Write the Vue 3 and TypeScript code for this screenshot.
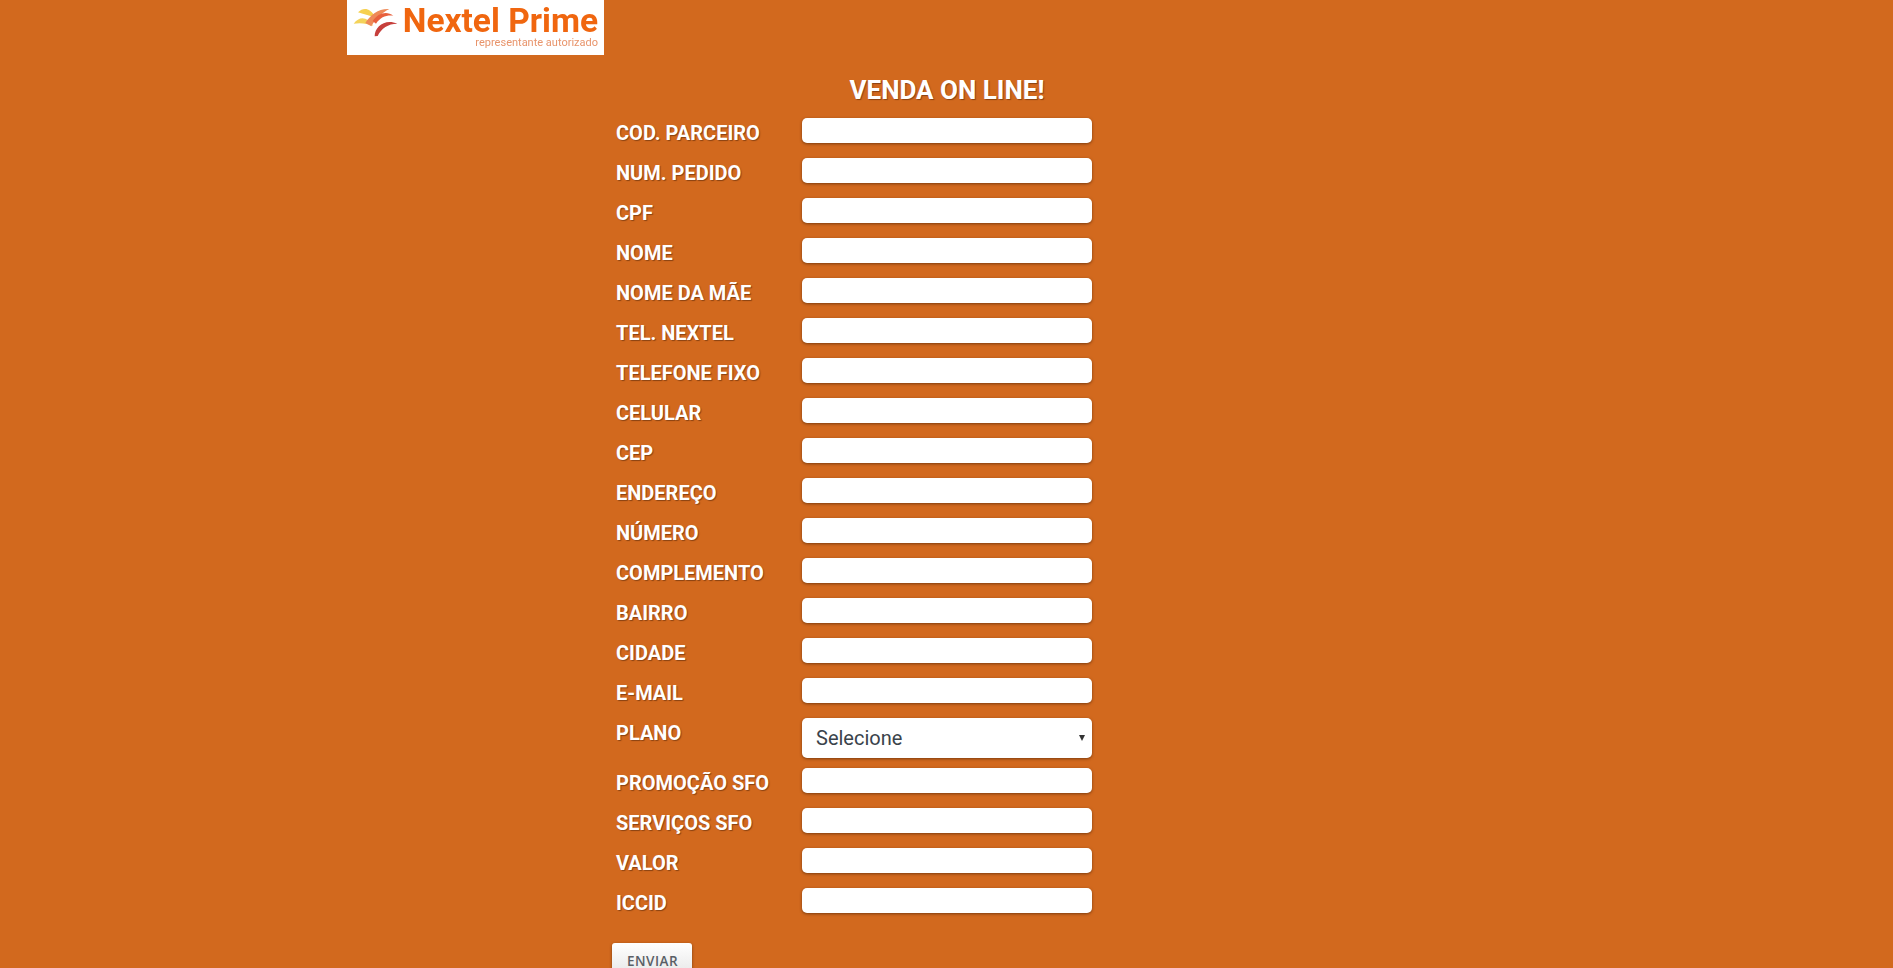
<script setup lang="ts">
const before: string[] = ['COD. PARCEIRO','NUM. PEDIDO','CPF','NOME','NOME DA MÃE','TEL. NEXTEL','TELEFONE FIXO','CELULAR','CEP','ENDEREÇO','NÚMERO','COMPLEMENTO','BAIRRO','CIDADE','E-MAIL']
const after: string[] = ['PROMOÇÃO SFO','SERVIÇOS SFO','VALOR','ICCID']
</script>

<template>
  <div class="page">
    <header class="logo">
      <svg class="mark" viewBox="25 20 135 90" fill="none">
        <path d="M40 36 C56 20 76 22 92 50 C76 48 60 42 40 36Z" fill="#f6d04e"/>
        <path d="M27 70 C44 46 68 48 86 76 C68 70 48 66 27 70Z" fill="#f4d35a"/>
        <path d="M62 68 C78 42 102 24 134 26 C114 36 94 52 80 78Z" fill="#ee8a58"/>
        <path d="M84 62 C100 38 126 30 146 46 C124 44 108 50 94 70Z" fill="#e8603c"/>
        <path d="M90 108 C90 78 122 54 158 70 C130 70 110 84 99 107Z" fill="#c63f3c"/>
      </svg>
      <div class="brand">
        <div class="brand-name">Nextel Prime</div>
        <div class="brand-sub">representante autorizado</div>
      </div>
    </header>

    <main class="wrap">
      <form class="form" @submit.prevent>
        <h1 class="title">VENDA ON LINE!</h1>
        <div v-for="l in before" :key="l" class="row">
          <label class="label">{{ l }}</label>
          <input class="field" type="text" />
        </div>
        <div class="row row-select">
          <label class="label">PLANO</label>
          <div class="select">
            <span>Selecione</span>
            <i class="caret"></i>
          </div>
        </div>
        <div v-for="l in after" :key="l" class="row">
          <label class="label">{{ l }}</label>
          <input class="field" type="text" />
        </div>
        <button class="send" type="submit">ENVIAR</button>
      </form>
    </main>
  </div>
</template>

<style>
html, body { margin: 0; background: #d2691e; overflow: hidden; height: 100%; }
</style>

<style scoped>
.page {
  width: 1200px;
  margin-left: 347px;
  font-family: Roboto, "Liberation Sans", sans-serif;
}
.logo {
  width: 257px;
  height: 55px;
  background: #fff;
  display: flex;
  align-items: flex-start;
  box-sizing: border-box;
  padding: 5px 0 0 6px;
  filter: blur(0.45px);
}
.mark { flex: none; margin-top: 2px; width: 45px; height: 30px; }
.brand { flex: 1; text-align: right; padding-right: 6px; }
.brand-name {
  font-size: 33.5px;
  line-height: 31px;
  font-weight: 700;
  color: #f0660f;
  white-space: nowrap;
}
.brand-sub {
  font-size: 11px;
  line-height: 13px;
  color: #e8946b;
  white-space: nowrap;
}
.wrap { padding-left: 265px; }
.form { width: 500px; padding-top: 20px; }
.title {
  margin: 0;
  width: 480px;
  text-align: center;
  color: #fff;
  font-size: 26px;
  line-height: 30px;
  font-weight: 700;
  height: 43px;
  text-shadow: 1px 1px 1px rgba(90, 40, 10, 0.6);
  box-sizing: border-box;
  padding-left: 190px;
  white-space: nowrap;
}
.row {
  display: flex;
  align-items: flex-start;
  height: 25px;
  margin-bottom: 15px;
}
.row-select { height: 40px; margin-bottom: 10px; }
.label {
  width: 190px;
  flex: none;
  padding-left: 4px;
  box-sizing: border-box;
  padding-top: 3px;
  color: #fff;
  font-size: 20px;
  line-height: 24px;
  font-weight: 700;
  text-shadow: 1px 1px 1px rgba(90, 40, 10, 0.6);
  white-space: nowrap;
}
.field {
  width: 290px;
  height: 25px;
  box-sizing: border-box;
  border: 0;
  border-radius: 5px;
  background: #fff;
  box-shadow: 0 1px 3px rgba(70, 30, 5, 0.6);
  padding: 0 8px;
  outline: none;
}
.select {
  width: 290px;
  height: 40px;
  box-sizing: border-box;
  background: #fff;
  border-radius: 5px;
  box-shadow: 0 1px 3px rgba(70, 30, 5, 0.6);
  display: flex;
  align-items: center;
  justify-content: space-between;
  padding: 0 7px 0 14px;
  color: #3a434b;
  font-size: 20px;
}
.caret {
  width: 0;
  height: 0;
  border-left: 3px solid transparent;
  border-right: 3px solid transparent;
  border-top: 6px solid #333;
}
.send {
  display: block;
  margin-top: 30px;
  width: 80px;
  height: 36px;
  box-sizing: border-box;
  border: 0;
  border-radius: 3px;
  background: linear-gradient(#ffffff, #e4e4e4);
  box-shadow: 0 1px 3px rgba(60, 30, 5, 0.6);
  color: #5a5f66;
  font-family: "Open Sans", "Liberation Sans", sans-serif;
  font-size: 13.5px;
  font-weight: 600;
  letter-spacing: 0.5px;
  padding: 0 0 0 1px;
}
</style>
